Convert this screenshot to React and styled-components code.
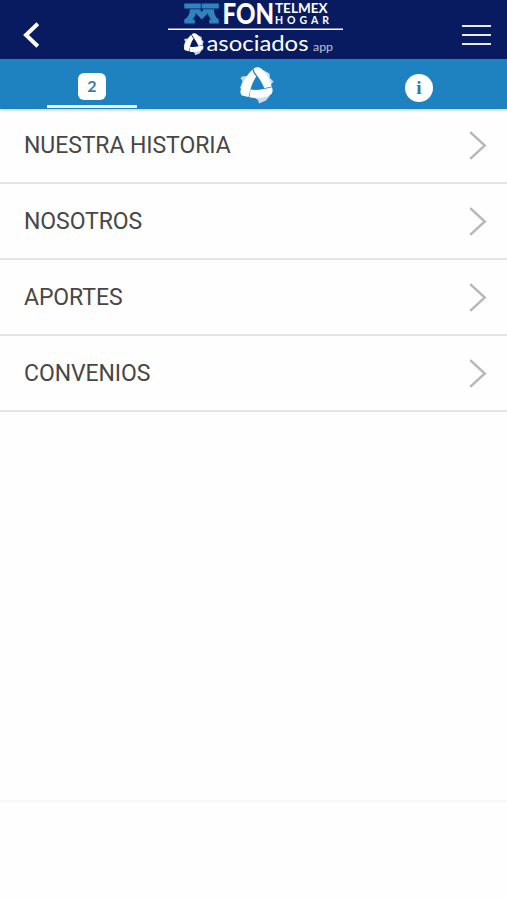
import React from 'react';
import styled, { createGlobalStyle } from 'styled-components';

function App() {
  return (
    <Screen>
      <GlobalStyle />
      <Header>
        <HeaderButton aria-label="Atrás">
          <svg width="18" height="26" viewBox="0 0 18 26">
            <path
              d="M15.800 1.800 4 13l11.800 11.200"
              fill="none"
              stroke="#fff"
              strokeWidth="4"
            />
          </svg>
        </HeaderButton>
        <BrandLogo />
        <HeaderButton aria-label="Menú">
          <MenuLines>
            <MenuLine />
            <MenuLine />
            <MenuLine />
          </MenuLines>
        </HeaderButton>
      </Header>
      <Tabs>
        <Tab>
          <Badge>2</Badge>
          <ActiveBar />
        </Tab>
        <Tab>
          <TriangleMark width="36" height="38" tip="#c9dcf0" />
        </Tab>
        <Tab>
          <InfoCircle>i</InfoCircle>
        </Tab>
      </Tabs>
      <Menu>
        {MENU_ITEMS.map(label => (
          <MenuItem key={label}>
            <MenuLabel>{label}</MenuLabel>
            <svg width="18" height="29" viewBox="0 0 18 29">
              <path
                d="M1.200 1.200 15.800 14.500 1.200 27.800"
                fill="none"
                stroke="#b8b8b8"
                strokeWidth="2.500"
              />
            </svg>
          </MenuItem>
        ))}
      </Menu>
      <Footer />
    </Screen>
  );
}

export default App;

function TriangleMark({ tip, ...rest }) {
  return (
    <svg viewBox="0 0 36 38" {...rest}>
      <g fill={tip}>
        <path d="M24 4 30.500 7.500 31 12l3.500 3.500L31.500 19z" />
        <path d="M8 10 3 10.500 1.500 12 3.500 15 1 22l2.500 2z" />
        <path d="M15 31.500l4 2.500 1 3.500 7-3 4-5z" />
      </g>
      <g fill="#fff">
        <path d="M14.500 2.500C17 .8 20.500.8 22.800 3 28 7.500 31 13.500 32.700 20.500L25.300 22.300C23.500 18 21.500 14 18 9.500 16.500 7.500 15 5.500 14.500 2.500z" />
        <path d="M13.500 3.500C14 6.500 15.500 8.500 17.300 10.500 14.500 14.500 12.500 19 11.300 24L9.500 31 3 29.500C.8 27.500 1.300 25 2.300 22 4.500 14.500 8 8.500 13.500 3.500z" />
        <path d="M11.600 23.500C16 24.300 20.500 24 25 22.900L33 21.300C34.300 25 33.500 28 30.500 29.500 24 32.500 17 32.800 10.300 31.300z" />
      </g>
    </svg>
  );
}

function BrandLogo() {
  return (
    <Logo viewBox="0 0 176 59">
      <g fill="#2f84bf">
        <path d="M16.300 3.500h16.500v5H16.300zM33.600 3.500h17.200v5H33.600z" />
        <path d="M22 9.300h10l1.800 3 1.800-3H46c0 4.700 1.500 8.200 4.700 10.200v4h-9.400v-4h2.200c-2.200-1.800-3.200-4-3.700-6.300l-6 6.300-6-6.300c-.5 2.500-1.500 4.700-3.500 6.300h2.500v4H16.300v-4C20 17.500 22 14 22 9.300z" />
      </g>
      <g fill="#fff">
        <LogoText
          x="54.500"
          y="23.600"
          fontSize="27.500"
          fontWeight="900"
          textLength="51.500"
          lengthAdjust="spacingAndGlyphs"
        >
          FON
        </LogoText>
        <LogoText
          x="107"
          y="13"
          fontSize="12.500"
          fontWeight="700"
          textLength="52.500"
          lengthAdjust="spacingAndGlyphs"
        >
          TELMEX
        </LogoText>
        <LogoText
          x="107"
          y="23.600"
          fontSize="10.500"
          fontWeight="700"
          textLength="54"
          lengthAdjust="spacing"
        >
          HOGAR
        </LogoText>
        <path d="M0 28.500h175v1.500H0z" />
        <LogoText
          x="38.500"
          y="51.300"
          fontSize="21.500"
          textLength="102"
          lengthAdjust="spacingAndGlyphs"
        >
          asociados
        </LogoText>
        <LogoText
          x="145"
          y="51.300"
          fontSize="10.500"
          opacity=".72"
          textLength="20"
          lengthAdjust="spacingAndGlyphs"
        >
          app
        </LogoText>
      </g>
      <TriangleMark x="15" y="32.500" width="22" height="23" tip="#c5cfea" />
    </Logo>
  );
}

const MENU_ITEMS = ['NUESTRA HISTORIA', 'NOSOTROS', 'APORTES', 'CONVENIOS'];

const GlobalStyle = createGlobalStyle`
  * {
    box-sizing: border-box;
  }

  body {
    margin: 0;
    background: #fefefe;
    font-family: Roboto, sans-serif;
  }

  svg {
    display: block;
    flex-shrink: 0;
  }
`;

const Screen = styled.div`
  display: flex;
  flex-direction: column;
  width: 100%;
  height: 900px;
  overflow: hidden;
`;

const Header = styled.header`
  display: flex;
  flex-shrink: 0;
  align-items: flex-start;
  justify-content: space-between;
  height: 59px;
  padding: 0 16px 0 22px;
  background: #091b60;
`;

const HeaderButton = styled.button`
  display: flex;
  margin-top: 22px;
  padding: 0;
  background: transparent;
  border: none;
  cursor: pointer;
`;

const MenuLines = styled.span`
  display: flex;
  flex-direction: column;
  gap: 7px;
  padding-top: 3px;
`;

const MenuLine = styled.span`
  width: 29px;
  height: 2px;
  background: #e9ecf8;
`;

const Logo = styled.svg`
  width: 176px;
  height: 59px;
  margin-left: 10px;
  overflow: visible;
`;

const LogoText = styled.text`
  font-family: Lato, sans-serif;
`;

const Tabs = styled.nav`
  display: grid;
  flex-shrink: 0;
  grid-template-columns: 184px 145px 1fr;
  height: 50px;
  background: #1e82c0;
  box-shadow: 0 1px 3px rgb(40 110 170 / 35%);
`;

const Tab = styled.div`
  display: flex;
  flex-direction: column;
  align-items: center;
  justify-content: space-between;

  > svg {
    margin-top: 7px;
  }
`;

const Badge = styled.span`
  width: 28px;
  height: 27px;
  margin-top: 14px;
  border-radius: 6px;
  background: #fff;
  color: #347fae;
  font-family: Lato, sans-serif;
  font-size: 16px;
  font-weight: 700;
  line-height: 26px;
  text-align: center;
`;

const ActiveBar = styled.span`
  width: 90px;
  height: 3px;
  margin-bottom: 1px;
  background: #dff5ff;
`;

const InfoCircle = styled.span`
  width: 28px;
  height: 28px;
  margin: 15px 0 0 2px;
  border-radius: 50%;
  background: #fff;
  color: #35769b;
  font-family: 'Liberation Serif', serif;
  font-size: 19px;
  font-weight: 700;
  line-height: 28px;
  text-align: center;
`;

const Menu = styled.ul`
  margin: 0;
  padding: 0;
  list-style: none;
`;

const MenuItem = styled.li`
  display: flex;
  align-items: center;
  justify-content: space-between;
  height: 76px;
  padding: 0 20px 0 24px;
  border-bottom: 2px solid #e4e4e4;

  &:first-child {
    height: 75px;
  }
`;

const MenuLabel = styled.span`
  color: #474747;
  font-size: 23px;
  letter-spacing: -0.08px;
`;

const Footer = styled.footer`
  height: 100px;
  margin-top: auto;
  border-top: 2px solid #f8f8f8;
`;
